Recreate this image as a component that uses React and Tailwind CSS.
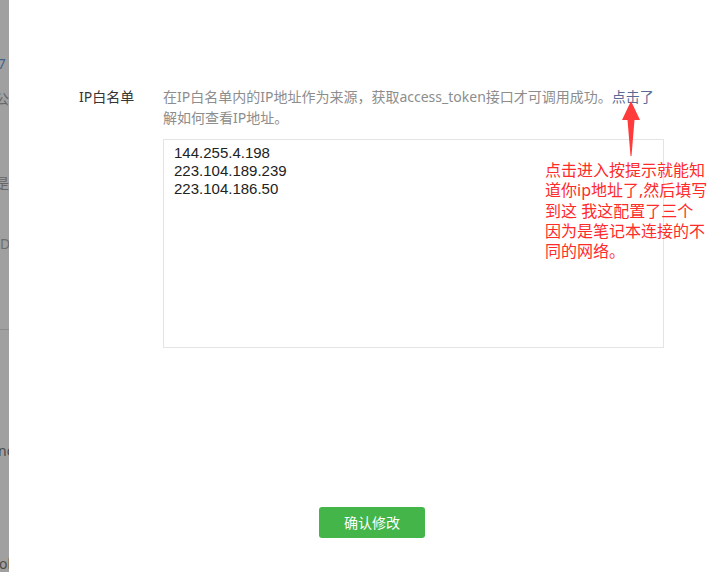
import React from "react";

const cjk = { fontFamily: '"Noto Sans", "Noto Sans CJK SC", sans-serif' };

function EdgeStrip() {
  // the edge of the page behind the dialog, dimmed by the mask
  return (
    <div className="w-[9px] shrink-0 h-[572px] bg-[#a0a0a0] overflow-hidden flex flex-col text-[14px] text-[#666]" style={cjk}>
      <div className="h-[56px]" />
      <div className="h-[16px] leading-[16px] whitespace-nowrap ml-[-7px] text-[#40648c]">f7</div>
      <div className="h-[20px]" />
      <div className="h-[16px] leading-[16px] whitespace-nowrap ml-[-5px]">公</div>
      <div className="h-[68px]" />
      <div className="h-[16px] leading-[16px] whitespace-nowrap ml-[-5px]">是</div>
      <div className="h-[46px]" />
      <div className="h-[16px] leading-[16px] whitespace-nowrap ml-[0px] text-[#6e6e6e]">D</div>
      <div className="h-[77px]" />
      <div className="h-px bg-[#8c8c8c]" />
      <div className="h-[114px]" />
      <div className="h-[16px] leading-[16px] whitespace-nowrap ml-[-2px] text-[#4a4a4a]">nc</div>
      <div className="h-[98px]" />
      <div className="h-[16px] leading-[16px] whitespace-nowrap ml-[-1px] text-[#4a4a4a]">ol</div>
    </div>
  );
}

function Arrow() {
  return (
    <svg width="24" height="60" viewBox="0 0 24 60" className="absolute left-[610px] top-[100px]">
      <path d="M12 1 L3 20 L8.5 20 L11.5 56 L12.5 56 L15.5 20 L21 20 Z" fill="#ff3b3b" />
    </svg>
  );
}

export default function App() {
  return (
    <div className="w-[714px] h-[572px] flex bg-white overflow-hidden" style={cjk}>
      <EdgeStrip />
      <div className="relative flex-1 flex flex-col pl-[70px] pt-[86px]">
        <div className="flex">
          <div className="w-[84px] shrink-0 text-[14px] leading-[21px] text-[#353535]">IP白名单</div>
          <div className="flex flex-col">
            <p className="text-[14px] leading-[21px] text-[#8d8d8d] whitespace-nowrap">
              在IP白名单内的IP地址作为来源，获取access_token接口才可调用成功。
              <span className="text-[#576b95]">点击了</span>
              <br />
              解如何查看IP地址。
            </p>
            <textarea
              readOnly
              defaultValue={"144.255.4.198\n223.104.189.239\n223.104.186.50"}
              className="mt-[11px] w-[501px] h-[209px] resize-none border border-[#e4e4e4] pl-[10px] pt-[4px] text-[15px] leading-[18px] text-[#222] outline-none"
              style={{ fontFamily: '"Liberation Sans", Arial, sans-serif' }}
            />
          </div>
        </div>
        <div className="flex pl-[240px] mt-[159px]">
          <button className="w-[106px] h-[31px] rounded-[3px] bg-[#44b549] text-white text-[14px] leading-[31px]">
            确认修改
          </button>
        </div>

        <Arrow />
        <div className="absolute left-[536px] top-[160px] text-[16px] leading-[20.3px] text-[#ff2a2a] whitespace-nowrap">
          点击进入按提示就能知
          <br />
          道你ip地址了,然后填写
          <br />
          到这 我这配置了三个
          <br />
          因为是笔记本连接的不
          <br />
          同的网络。
        </div>
      </div>
    </div>
  );
}
